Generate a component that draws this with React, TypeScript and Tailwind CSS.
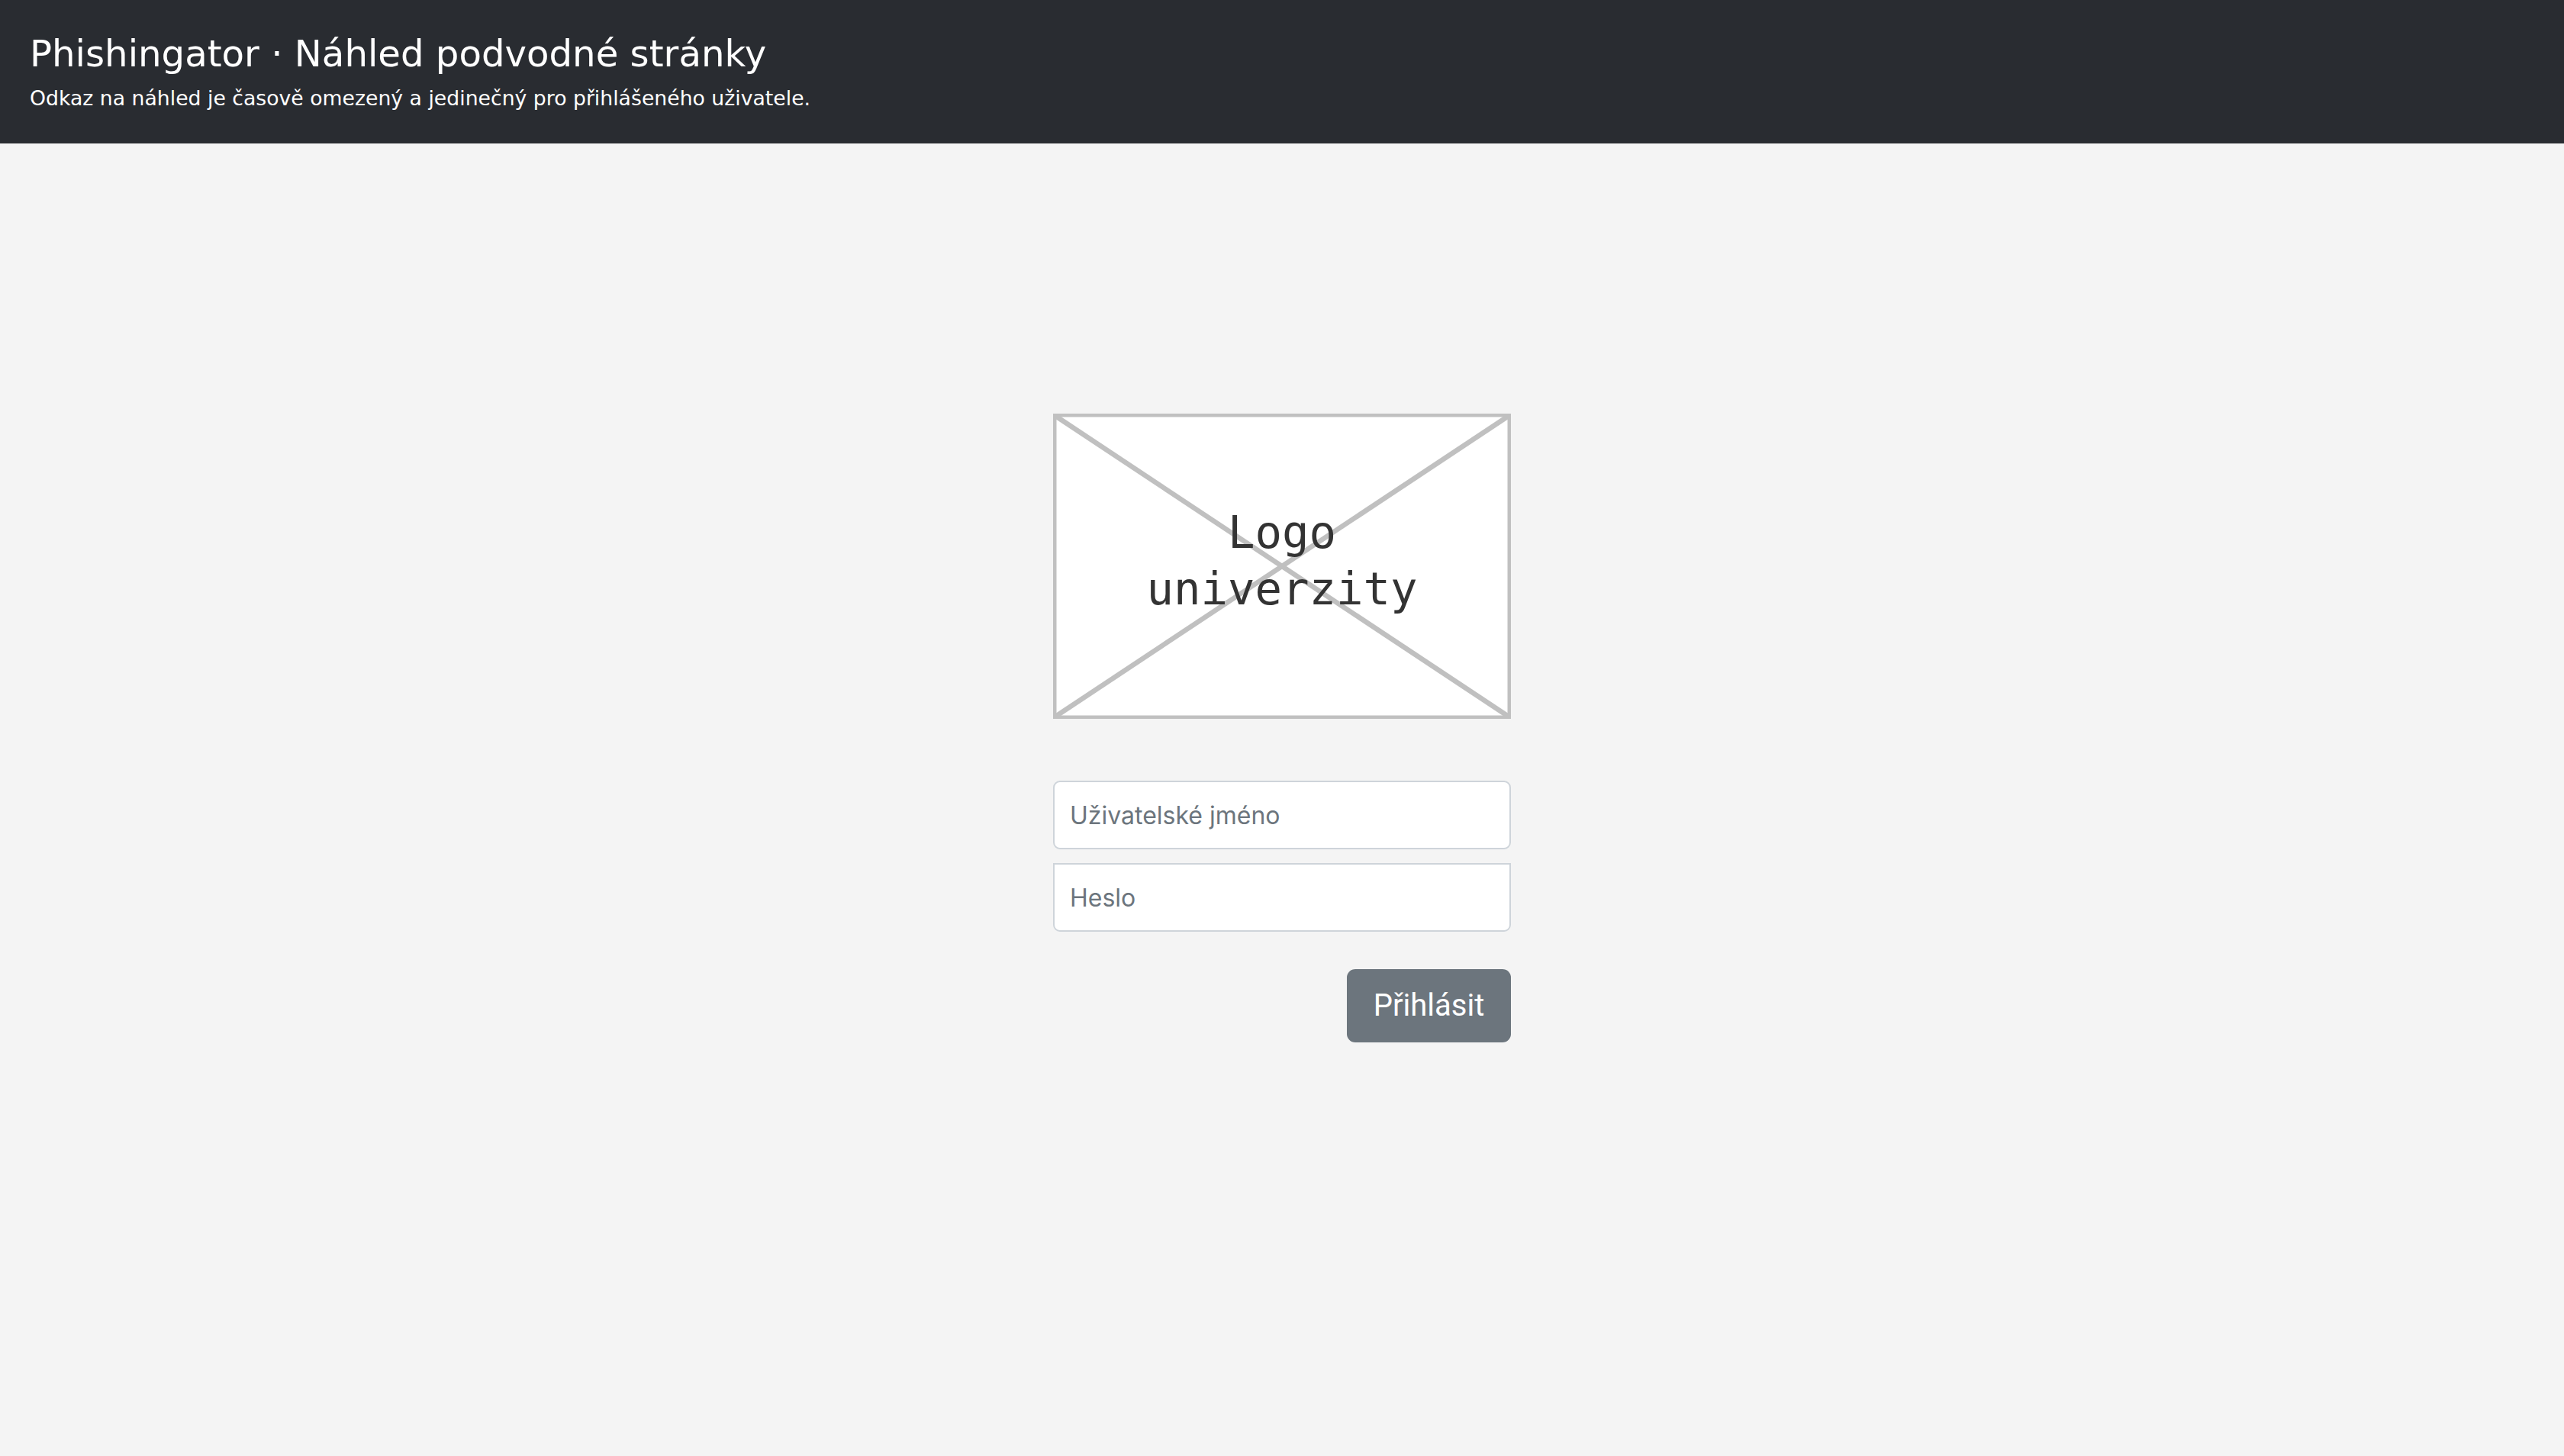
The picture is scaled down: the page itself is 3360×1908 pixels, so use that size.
import React from 'react';

const LogoPlaceholder: React.FC = () => (
  <div className="relative h-[400px] w-[600px] bg-white">
    <svg className="absolute inset-0" width="600" height="400" viewBox="0 0 600 400">
      <rect x="2.25" y="2.25" width="595.5" height="395.5" fill="none" stroke="#c0c0c0" strokeWidth="4.5" />
      <line x1="3" y1="3" x2="597" y2="397" stroke="#c0c0c0" strokeWidth="6.5" />
      <line x1="597" y1="3" x2="3" y2="397" stroke="#c0c0c0" strokeWidth="6.5" />
    </svg>
    <div className="relative flex h-full flex-col items-center justify-center pb-[14px] font-['DejaVu_Sans_Mono',monospace] text-[59px] leading-[74px] text-[#333333]">
      <span>Logo</span>
      <span>univerzity</span>
    </div>
  </div>
);

const App: React.FC = () => {
  return (
    <div className="min-h-screen bg-[#f4f4f4]">
      {/* Header */}
      <header className="h-[188px] bg-[#292c31] px-[39px] pt-[41px] font-['DejaVu_Sans',sans-serif] text-white">
        <h1 className="text-[48.2px] leading-[58px]">Phishingator · Náhled podvodné stránky</h1>
        <p className="mt-[10px] text-[26.7px] leading-[39px]">
          Odkaz na náhled je časově omezený a jedinečný pro přihlášeného uživatele.
        </p>
      </header>

      {/* Login preview */}
      <main className="flex justify-center pt-[354px]">
        <div className="flex w-[600px] flex-col">
          <LogoPlaceholder />

          <form className="mt-[81px] flex flex-col font-['Inter',sans-serif]">
            <input
              type="text"
              placeholder="Uživatelské jméno"
              className="h-[90px] w-full rounded-[9px] border-2 border-[#ced4da] bg-white px-[20px] text-[32px] text-[#212529] outline-none placeholder:text-[#6c757d]"
            />
            <input
              type="password"
              placeholder="Heslo"
              className="mt-[18px] h-[90px] w-full rounded-b-[9px] border-2 border-[#ced4da] bg-white px-[20px] text-[32px] text-[#212529] outline-none placeholder:text-[#6c757d]"
            />
            <div className="mt-[49px] flex justify-end">
              <button
                type="button"
                className="h-[96px] w-[215px] rounded-[11px] bg-[#6c757d] font-['Roboto',sans-serif] text-[40px] text-white"
              >
                Přihlásit
              </button>
            </div>
          </form>
        </div>
      </main>
    </div>
  );
};

export default App;
